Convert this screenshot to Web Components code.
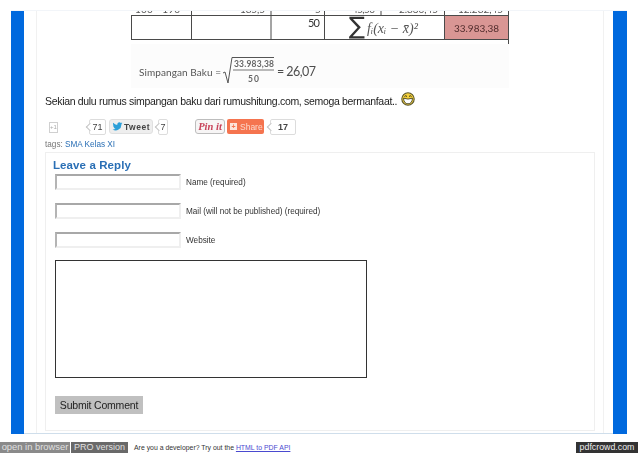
<!doctype html>
<html lang="id">
  <head>
    <meta charset="utf8" />
    <title>Simpangan Baku</title>
    <style>
      html, body {
        margin: 0;
        height: 453px;
        overflow: hidden;
        background: #fff;
        font-family: "Liberation Sans", Arial, sans-serif;
      }
    </style>
  </head>
  <body>
    <pdf-sheet>
      <stat-figure></stat-figure>
      <closing-note>Sekian dulu rumus simpangan baku dari rumushitung.com, semoga bermanfaat..</closing-note>
      <social-bar></social-bar>
      <tag-line></tag-line>
      <reply-box>
        <reply-field>Name (required)</reply-field>
        <reply-field>Mail (will not be published) (required)</reply-field>
        <reply-field>Website</reply-field>
      </reply-box>
    </pdf-sheet>
    <promo-bar></promo-bar>

    <script>
      class Base extends HTMLElement {
        connectedCallback() {
          if (!this.shadowRoot) {
            this.attachShadow({ mode: "open" })
            this.shadowRoot.innerHTML = this.constructor.markup
          }
        }
      }

      class PdfSheet extends Base {
        static markup = `
<style>
  :host {
    display: grid;
    grid-template-columns: 13px 589px 14px;
    height: 423px;
    margin: 10px 11px 0;
    border-top: 1px solid #f2f5f9;
  }
  .bar { background: #0069de; }
  .mid {
    border-bottom: 1px solid #cfdeeb;
    padding: 0 9px 0 12px;
    height: 422px;
    overflow: hidden;
  }
  .post {
    border-left: 1px solid #f1f1f1;
    border-right: 1px solid #f1f1f1;
    padding: 0 8px;
    height: 100%;
    box-sizing: border-box;
    filter: blur(.25px);
  }
</style>
<div class="bar"></div>
<div class="mid"><div class="post"><slot></slot></div></div>
<div class="bar"></div>`
      }

      class StatFigure extends Base {
        static markup = `
<style>
  :host { display: block; height: 77px; padding-left: 86px; }
  svg { display: block; filter: blur(.3px); }
  text { font-family: Lato, "Open Sans", sans-serif; fill: #3d3d3d; }
  .top { font-size: 10px; fill: #555; }
  .eq { font-family: "Liberation Serif", serif; font-style: italic; font-size: 14px; fill: #555; }
</style>
<svg width="378" height="77" viewBox="0 0 378 77">
  <rect y="33" width="378" height="44" fill="#fcfcfc"/>
  <rect x="313" y="4" width="64" height="25" fill="#d99694"/>
  <g stroke="#4a4a4a" stroke-width="1" fill="none">
    <path d="M0 4.500H377.500M0 28.500H377.500"/>
    <path d="M.5 4.500V28.500M60.500 0V28.500M140 0V28.500M193.500 0V28.500M250 0V4.500M313.500 0V28.500M377.500 0V33"/>
  </g>
  <text class="top" x="4" y="2" textLength="45">100 - 190</text>
  <text class="top" x="109" y="2" textLength="25">185,5</text>
  <text class="top" x="184" y="2">5</text>
  <text class="top" x="221" y="2" textLength="23">45,50</text>
  <text class="top" x="268" y="2" textLength="39">2.830,45</text>
  <text class="top" x="327" y="2" textLength="45">12.282,45</text>
  <text x="177" y="16" font-size="11" style="fill:#333" textLength="12">50</text>
  <text x="218" y="23" font-size="24" style="font-family:'DejaVu Sans',sans-serif;fill:#333">∑</text>
  <text class="eq" x="236" y="22" textLength="51">fᵢ(xᵢ − x̄)²</text>
  <text x="323" y="21" font-size="10" style="fill:#512c2c" textLength="45">33.983,38</text>

  <text x="8" y="65" font-size="10" style="fill:#555" textLength="82">Simpangan Baku =</text>
  <path d="M92 62l2 -1 3 11 4 -25.500H143" stroke="#555" fill="none"/>
  <text x="103" y="56" font-size="8.500" font-weight="700" style="fill:#666" textLength="40">33.983,38</text>
  <path d="M102 59H143" stroke="#777"/>
  <text x="117" y="71" font-size="8.500" font-weight="700" style="fill:#666" textLength="11">50</text>
  <text x="146" y="65" font-size="12.500" style="fill:#4d4d4d" textLength="39">= 26,07</text>
</svg>`
      }

      class ClosingNote extends Base {
        static markup = `
<style>
  :host {
    display: flex;
    align-items: center;
    gap: 4px;
    height: 26px;
    font-size: 10.500px;
    letter-spacing: -.32px;
    color: #1c1c1c;
  }
  svg { margin-top: -5px; flex: none; }
</style>
<slot></slot>
<svg width="14" height="14" viewBox="0 0 14 14">
  <circle cx="7" cy="7" r="6.200" fill="#f3cf3b" stroke="#5b5730" stroke-width="1.100"/>
  <path d="M2.500 6.200Q7 8 11.500 6.200Q11 11.800 7 11.800Q3 11.800 2.500 6.200Z" fill="#fff" stroke="#33331c" stroke-width=".8"/>
  <path d="M3.500 4.500Q4.700 3 6 4.500M8 4.500Q9.300 3 10.500 4.500" stroke="#33331c" fill="none"/>
</svg>`
      }

      class CountBubble extends Base {
        static markup = `
<style>
  :host {
    display: flex;
    align-items: center;
    justify-content: center;
    position: relative;
    box-sizing: border-box;
    height: 16px;
    background: #fff;
    border: 1px solid #dcdcdc;
    border-radius: 2px;
    font-size: 9px;
    color: #444;
  }
  :host::before {
    content: "";
    position: absolute;
    left: -3px;
    top: 4px;
    width: 5px;
    height: 5px;
    background: #fff;
    border-left: 1px solid #c4c4c4;
    border-bottom: 1px solid #c4c4c4;
    transform: rotate(45deg);
  }
  span { position: relative; }
</style>
<span><slot></slot></span>`
      }

      class SocialBar extends Base {
        static markup = `
<style>
  :host {
    display: flex;
    align-items: flex-start;
    height: 24px;
    padding: 5px 0 0 4px;
    box-sizing: border-box;
  }
  .plus {
    box-sizing: border-box;
    width: 9px;
    height: 11px;
    margin: 3px 31px 0 0;
    border: 1px solid #d0d0d0;
    font-size: 6px;
    line-height: 9px;
    text-align: center;
    color: #aaa;
  }
  .c71 { width: 17px; }
  .tweet {
    box-sizing: border-box;
    display: flex;
    align-items: center;
    gap: 1px;
    width: 44px;
    height: 15px;
    margin: 0 5px 0 3px;
    padding-left: 2px;
    background: #eee;
    border: 1px solid #e0e0e0;
    border-radius: 3px;
    font-size: 8.500px;
    font-weight: 700;
    letter-spacing: .5px;
    color: #444;
  }
  .c7 { width: 10px; margin-right: 27px; }
  .pin {
    box-sizing: border-box;
    width: 30px;
    height: 15px;
    margin-right: 2px;
    background: #f7f5f5;
    border: 1px solid #bdbdbd;
    border-radius: 3px;
    font: italic 700 10.500px/13px "Liberation Serif", serif;
    text-align: center;
    color: #c8435a;
  }
  .share {
    box-sizing: border-box;
    display: flex;
    align-items: center;
    gap: 3px;
    width: 37px;
    height: 15px;
    margin-right: 6px;
    padding-left: 3px;
    background: #f5744f;
    border-radius: 2px;
    font-size: 8.500px;
    color: #fcd9cd;
  }
  .share i {
    width: 7px;
    height: 7px;
    background: #fde3da;
    font: 700 7px/7px "Liberation Sans", sans-serif;
    text-align: center;
    color: #f5744f;
  }
  .c17 { width: 26px; font-weight: 700; }
</style>
<div class="plus">+1</div>
<count-bubble class="c71">71</count-bubble>
<div class="tweet">
  <svg width="11" height="9" viewBox="0 0 24 20"><path fill="#2b9fd8" d="M23 2.900c-.8.4-1.700.6-2.600.7.900-.6 1.600-1.400 2-2.500-.9.500-1.800.9-2.900 1.100A4.500 4.500 0 0 0 11.800 6.300C8 6.100 4.700 4.300 2.500 1.600c-1.200 2-.6 4.600 1.400 6-.7 0-1.400-.2-2-.6 0 2.200 1.500 4.100 3.600 4.500-.7.200-1.400.200-2 .1.600 1.800 2.200 3.100 4.200 3.100A9 9 0 0 1 1 16.600 12.800 12.800 0 0 0 20.700 5.200c.9-.6 1.700-1.400 2.300-2.300z"/></svg>
  Tweet
</div>
<count-bubble class="c7">7</count-bubble>
<div class="pin">Pin it</div>
<div class="share"><i>+</i>Share</div>
<count-bubble class="c17">17</count-bubble>`
      }

      class TagLine extends Base {
        static markup = `
<style>
  :host {
    display: block;
    height: 14px;
    font-size: 8.200px;
    line-height: 13px;
    color: #777;
  }
  a { color: #2a6fb5; text-decoration: none; }
</style>
tags: <a href="#">SMA Kelas XI</a>`
      }

      class ReplyField extends Base {
        static markup = `
<style>
  :host {
    display: flex;
    align-items: center;
    gap: 5px;
    height: 16px;
    margin-bottom: 13px;
    font-size: 8.200px;
    color: #333;
  }
  input {
    box-sizing: border-box;
    width: 126px;
    height: 16px;
    margin: 0;
    padding: 0;
    background: #fff;
    border: 2px solid;
    border-color: #a8a8a8 #efefef #efefef #b4b4b4;
  }
</style>
<input type="text">
<span><slot></slot></span>`
      }

      class ReplyBox extends Base {
        static markup = `
<style>
  :host {
    display: block;
    box-sizing: border-box;
    height: 279px;
    padding: 5px 9px 0;
    border: 1px solid #efefef;
  }
  h3 {
    margin: 0 0 2px -2px;
    height: 14px;
    font-size: 11.500px;
    line-height: 14px;
    letter-spacing: .1px;
    color: #2a6fb5;
  }
  textarea {
    display: block;
    box-sizing: border-box;
    width: 312px;
    height: 118px;
    margin: -1px 0 18px;
    padding: 0;
    resize: none;
    background: #fff;
    border: 1px solid #333;
    border-radius: 0;
  }
  button {
    display: block;
    width: 88px;
    height: 18px;
    padding: 0;
    border: 0;
    background: #c0c0c0;
    font: 10.500px "Liberation Sans", sans-serif;
    letter-spacing: -.2px;
    color: #222;
  }
</style>
<h3>Leave a Reply</h3>
<slot></slot>
<textarea></textarea>
<button>Submit Comment</button>`
      }

      class PromoBar extends Base {
        static markup = `
<style>
  :host {
    display: flex;
    align-items: stretch;
    height: 11px;
    margin-top: 8px;
    line-height: 10px;
  }
  .open, .pro { color: #e0e0e0; text-align: center; white-space: nowrap; }
  .open { width: 70px; background: #8a8a8a; margin-right: 1px; font-size: 9.400px; }
  .pro { width: 57px; background: #696969; font-size: 9px; }
  .dev { margin-left: 6px; font-size: 6.900px; line-height: 11px; color: #333; }
  .dev a { color: #4a4ad0; }
  .brand {
    margin-left: auto;
    width: 62px;
    background: #333;
    font-size: 8.800px;
    color: #eee;
    text-align: center;
  }
</style>
<div class="open">open in browser</div>
<div class="pro">PRO version</div>
<div class="dev">Are you a developer? Try out the <a href="#">HTML to PDF API</a></div>
<div class="brand">pdfcrowd.com</div>`
      }

      customElements.define("pdf-sheet", PdfSheet)
      customElements.define("stat-figure", StatFigure)
      customElements.define("closing-note", ClosingNote)
      customElements.define("count-bubble", CountBubble)
      customElements.define("social-bar", SocialBar)
      customElements.define("tag-line", TagLine)
      customElements.define("reply-field", ReplyField)
      customElements.define("reply-box", ReplyBox)
      customElements.define("promo-bar", PromoBar)
    </script>
  </body>
</html>
